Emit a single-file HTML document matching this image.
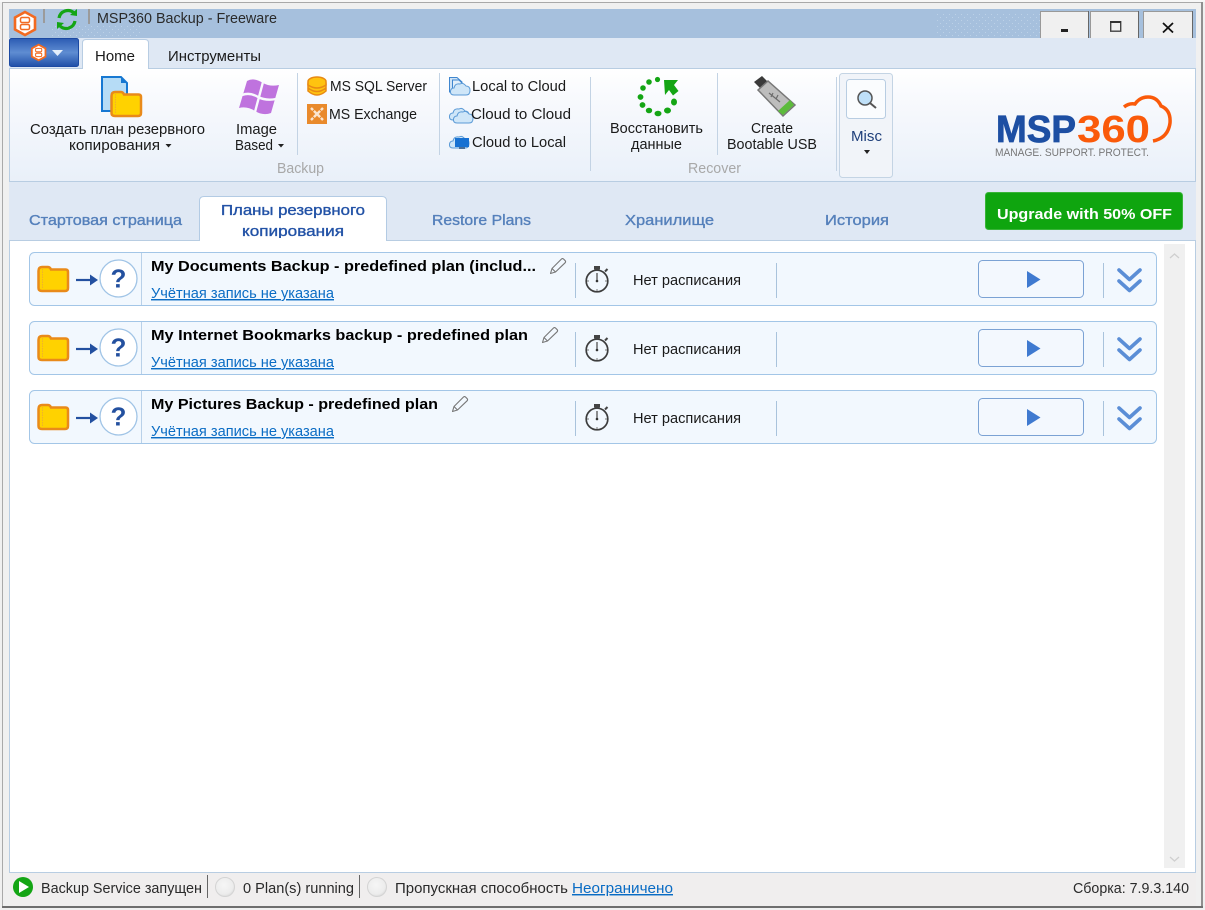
<!DOCTYPE html>
<html><head><meta charset="utf-8"><title>MSP360 Backup - Freeware</title>
<style>
html,body{margin:0;padding:0;background:#f0f0f0;width:1205px;height:910px;overflow:hidden}
svg{display:block}
text{font-family:"Liberation Sans","Noto Sans CJK SC",sans-serif;font-size:14.5px;fill:#1a1a1a}
.tab{font-size:14.5px;fill:#5580bb;stroke:#5580bb;stroke-width:.35px}
.act{fill:#2252a6;stroke:#2252a6}
.b{font-weight:bold;fill:#000}
.lnk{fill:#0a6cc4;text-decoration:underline}
.grp{fill:#a8a8a8}
</style></head><body>
<svg width="1205" height="910" viewBox="0 0 1205 910" xmlns="http://www.w3.org/2000/svg">
<defs>
<linearGradient id="rib" x1="0" y1="0" x2="0" y2="1"><stop offset="0" stop-color="#ffffff"/><stop offset=".3" stop-color="#f7f9fd"/><stop offset="1" stop-color="#e9f0f9"/></linearGradient>
<linearGradient id="mb" x1="0" y1="0" x2="0" y2="1"><stop offset="0" stop-color="#2c5cb4"/><stop offset=".5" stop-color="#5f8dd2"/><stop offset="1" stop-color="#1f4fa8"/></linearGradient>
<radialGradient id="led" cx=".45" cy=".4" r=".6"><stop offset="0" stop-color="#f6f6f6"/><stop offset=".8" stop-color="#ececec"/><stop offset="1" stop-color="#dcdcdc"/></radialGradient>
<pattern id="dots" width="6" height="6" patternUnits="userSpaceOnUse"><rect x="1" y="2" width="1" height="1" fill="#bcd1e7"/><rect x="4" y="5" width="1" height="1" fill="#bcd1e7"/></pattern>
<g id="folder">
<path d="M1.500 6 Q1.500 2 5 2 H11 Q13 2 14 4.500 H28.500 Q31 4.500 31 7 V23 Q31 26 28 26 H5 Q1.500 26 1.500 23Z" fill="#ffd200" stroke="#e98a1a" stroke-width="2.500"/>
<path d="M5.500 4 V24" stroke="#eeb12e" stroke-width="1" stroke-dasharray="1.500 1"/>
</g>
<g id="chev" fill="none" stroke="#5b8ed6" stroke-width="3.600" stroke-linecap="round" stroke-linejoin="round">
<path d="M2 2 L12.500 11.500 L23 2"/><path d="M2 13 L12.500 22.500 L23 13"/>
</g>
<g id="hex">
<path d="M12 1 L22 6.500 V18.500 L12 24 L2 18.500 V6.500Z" fill="#fff" stroke="#f26a21" stroke-width="2.600"/>
<rect x="7.500" y="6.500" width="9" height="5" rx="1.500" fill="#fff" stroke="#f26a21" stroke-width="1.500"/>
<rect x="7.500" y="13.500" width="9" height="5" rx="1.500" fill="#fff" stroke="#f26a21" stroke-width="1.500"/>
</g>
<g id="cloud"><path d="M4 15 Q0 15 .5 11 Q1 8 4 8 Q5 3 10 4 Q13 2 16 6 Q20 6 20 10.500 Q20 15 16 15Z"/></g>
<g id="row">
<rect x="29.500" y=".5" width="1127" height="53" rx="5" fill="#f2f8fe" stroke="#a3c6e7"/>
<line x1="141.500" y1="1" x2="141.500" y2="53" stroke="#b9d1e9"/>
<use href="#folder" x="37" y="13"/>
<path d="M76 28 H92" stroke="#2350a0" stroke-width="2.200"/><path d="M90 22.500 L98 28 L90 33.500Z" fill="#2350a0"/>
<circle cx="118.500" cy="26.500" r="18.500" fill="#fff" stroke="#a0c4e6" stroke-width="1.300"/>
<text x="118.500" y="35.500" text-anchor="middle" style="font-size:26px;font-weight:bold;fill:#23509f">?</text>
<line x1="575.500" y1="11" x2="575.500" y2="46" stroke="#a9c3dc"/>
<line x1="776.500" y1="11" x2="776.500" y2="46" stroke="#a9c3dc"/>
<circle cx="597" cy="29" r="10.800" fill="none" stroke="#3d3d3d" stroke-width="1.700"/>
<rect x="594" y="14" width="6" height="3.500" fill="#444"/><path d="M597 17 V19" stroke="#444" stroke-width="2"/>
<path d="M605 19.500 L607.500 17" stroke="#444" stroke-width="2"/>
<path d="M597 21 V29" stroke="#444" stroke-width="1.200"/><circle cx="597" cy="29" r="1.300" fill="#333"/>
<path d="M597 37 V39 M587 29 H589 M605 29 H607" stroke="#777" stroke-width="1"/>
<text x="633" y="33" textLength="108" lengthAdjust="spacingAndGlyphs">Нет расписания</text>
<rect x="978.500" y="8.500" width="105" height="37" rx="4" fill="#f3f8fe" stroke="#7ba2d4"/>
<path d="M1027 19 L1040.500 27.500 L1027 36Z" fill="#3f7ad0"/>
<line x1="1103.500" y1="11" x2="1103.500" y2="46" stroke="#a9c3dc"/>
<use href="#chev" x="1117" y="16"/>
<text x="151" y="46" class="lnk" textLength="183" lengthAdjust="spacingAndGlyphs">Учётная запись не указана</text>
</g>
<g id="pencil" fill="none" stroke="#777" stroke-width="1.100" stroke-linejoin="round">
<path d="M.5 15.500 L2 10.500 L11.500 1 Q12.500 .2 13.500 1 L15.200 2.700 Q16 3.700 15.200 4.700 L5.500 14 Z"/><path d="M2 10.500 L5.500 14"/>
</g>
</defs>

<!-- window frame -->
<rect width="1205" height="910" fill="#f0f0f0"/>
<rect x="0" y="0" width="1205" height="2" fill="#f7f7f7"/>
<rect x="2" y="2" width="1201" height="1" fill="#a9a9a9"/>
<rect x="2" y="2" width="1" height="905" fill="#a9a9a9"/>
<rect x="1201" y="2" width="2" height="905" fill="#8f8f8f"/>
<rect x="2" y="906" width="1201" height="2" fill="#6e6e6e"/>

<!-- title band -->
<rect x="9" y="9" width="1187" height="29" fill="#a6c0dd"/>
<rect x="50" y="26" width="90" height="12" fill="url(#dots)"/>
<rect x="935" y="14" width="105" height="24" fill="url(#dots)"/>
<use href="#hex" x="13" y="11"/>
<rect x="43" y="9" width="2" height="14" fill="#9b9b9b"/>
<g fill="none" stroke="#14a514" stroke-width="3.200">
<path d="M59 18 A9 9 0 0 1 74 13"/><path d="M75 21 A9 9 0 0 1 60 26"/>
</g>
<path d="M70 15 L77 16 L77 9Z M64 23 L57 22 L57 29Z" fill="#14a514"/>
<rect x="88" y="9" width="2" height="15" fill="#9b9b9b"/>
<text x="97" y="23" textLength="180" lengthAdjust="spacingAndGlyphs" style="fill:#2a2a2a">MSP360 Backup - Freeware</text>

<!-- window buttons -->
<g fill="#f0f0f0" stroke="#777">
<rect x="1040.500" y="11.500" width="48" height="30" stroke="#999"/>
<rect x="1090.500" y="11.500" width="48" height="30" stroke="#999"/>
<rect x="1143.500" y="11.500" width="49" height="30" stroke="#999"/>
</g>
<path d="M1088.500 11 V38 M1138.500 11 V38 M1192.500 11 V38" stroke="#666"/>
<rect x="1061" y="29" width="7" height="3" fill="#222"/>
<rect x="1110.700" y="21.700" width="10" height="9.500" fill="none" stroke="#444" stroke-width="1.400"/><rect x="1110" y="21" width="11" height="2" fill="#333"/>
<path d="M1163 23 L1173 32.500 M1173 23 L1163 32.500" stroke="#111" stroke-width="1.800"/>

<!-- tab strip -->
<rect x="9" y="38" width="1187" height="30" fill="#dfe8f4"/>
<rect x="9.500" y="38.500" width="69" height="28" rx="2" fill="url(#mb)" stroke="#1c4aa3"/>
<g transform="translate(30.500,44) scale(.68)"><use href="#hex"/></g>
<path d="M52 50 H63 L57.500 56Z" fill="#e4eefb"/>
<path d="M82.500 68 V43 Q82.500 39.500 86 39.500 H145 Q148.500 39.500 148.500 43 V68" fill="#fff" stroke="#b8cde3"/>
<text x="95" y="61" textLength="40" lengthAdjust="spacingAndGlyphs">Home</text>
<text x="168" y="61" textLength="93" lengthAdjust="spacingAndGlyphs">Инструменты</text>

<!-- ribbon -->
<rect x="9.500" y="68.500" width="1186" height="113" fill="url(#rib)" stroke="#b8cde2"/>
<rect x="83" y="67" width="65" height="3" fill="#fff"/>
<line x1="297.500" y1="73" x2="297.500" y2="155" stroke="#c3d3e4"/>
<line x1="439.500" y1="73" x2="439.500" y2="155" stroke="#c3d3e4"/>
<line x1="590.500" y1="77" x2="590.500" y2="171" stroke="#c3d3e4"/>
<line x1="717.500" y1="73" x2="717.500" y2="155" stroke="#c3d3e4"/>
<line x1="836.500" y1="77" x2="836.500" y2="171" stroke="#c3d3e4"/>

<!-- new plan icon -->
<path d="M102 77 H121 L127 83 V111 H102Z" fill="#b6dcf6" stroke="#1778d2" stroke-width="2"/>
<path d="M121 77 V83 H127Z" fill="#1778d2"/>
<use href="#folder" x="110" y="90"/>
<text x="30" y="134" textLength="175" lengthAdjust="spacingAndGlyphs">Создать план резервного</text>
<text x="69" y="150" textLength="91" lengthAdjust="spacingAndGlyphs">копирования</text>
<path d="M165.500 144 H171.500 L168.500 147.500Z" fill="#222"/>

<!-- windows icon -->
<path d="M247 81 Q254 77 263 83 Q270 87 279 85 L271 113 Q263 116 255 111 Q247 106 239 108Z" fill="#bf73de"/>
<path d="M263 82 L255 112 M242 95 Q250 92 258 97 Q266 101 276 99" fill="none" stroke="#f8fafd" stroke-width="2.400"/>
<text x="236" y="134" textLength="41" lengthAdjust="spacingAndGlyphs">Image</text>
<text x="235" y="150" textLength="38" lengthAdjust="spacingAndGlyphs">Based</text>
<path d="M278 144 H284 L281 147.500Z" fill="#222"/>

<!-- SQL -->
<g fill="#ffc30f" stroke="#e88a14" stroke-width="1.500">
<path d="M308 89 V91 Q317 99 326 91 V89Z"/>
<path d="M308 84 V88 Q317 95 326 88 V84Z"/>
<ellipse cx="317" cy="81.500" rx="9" ry="4.500"/>
<path d="M308 82 V85 Q317 91 326 85 V82"/>
</g>
<text x="330" y="91" textLength="97" lengthAdjust="spacingAndGlyphs">MS SQL Server</text>
<rect x="307" y="104" width="20" height="20" fill="#e98a2c"/>
<path d="M311 108 L323 120 M323 108 L311 120" stroke="#fbe6d0" stroke-width="2.400"/>
<path d="M317 107 L324 114 L317 121 L310 114Z" fill="none" stroke="#e98a2c" stroke-width="1.200"/>
<text x="329" y="119" textLength="88" lengthAdjust="spacingAndGlyphs">MS Exchange</text>

<!-- cloud group -->
<path d="M449.500 77.500 H457 L462 82 V92 H449.500Z" fill="#cfe3f5" stroke="#3f86cf"/>
<path d="M452.500 80 H459 L464 85 V94 H452.500Z" fill="#e2effa" stroke="#3f86cf"/>
<use href="#cloud" x="450" y="80" fill="#cfe6f8" stroke="#5b9ad6"/>
<text x="472" y="91" textLength="94" lengthAdjust="spacingAndGlyphs">Local to Cloud</text>
<use href="#cloud" x="449" y="105" fill="#cfe6f8" stroke="#5b9ad6"/>
<g transform="translate(453,108)"><use href="#cloud" fill="#cfe6f8" stroke="#5b9ad6"/></g>
<text x="471" y="119" textLength="100" lengthAdjust="spacingAndGlyphs">Cloud to Cloud</text>
<use href="#cloud" x="449" y="133" fill="#cfe6f8" stroke="#5b9ad6"/>
<rect x="455" y="138" width="14" height="9" fill="#1771d2"/><rect x="459" y="147" width="6" height="2" fill="#4a6f98"/>
<text x="472" y="147" textLength="94" lengthAdjust="spacingAndGlyphs">Cloud to Local</text>
<text x="277" y="173" class="grp" textLength="47" lengthAdjust="spacingAndGlyphs">Backup</text>

<!-- restore -->
<g fill="#14a514">
<circle cx="657.500" cy="79.500" r="2.600"/><circle cx="649" cy="82" r="2.800"/><circle cx="643" cy="88" r="2.800"/>
<circle cx="640.500" cy="97" r="2.900"/><circle cx="642.500" cy="105" r="2.900"/><ellipse cx="649" cy="110.500" rx="3.200" ry="2.800"/>
<ellipse cx="658" cy="113.500" rx="3.500" ry="2.800"/><ellipse cx="667.500" cy="110.500" rx="3.500" ry="3"/><ellipse cx="674" cy="102" rx="3" ry="3.500"/>
<path d="M664 80 H678 L674 85 L678.500 91 L673 95.500 L669 90 L665 95Z"/>
</g>
<text x="610" y="133" textLength="93" lengthAdjust="spacingAndGlyphs">Восстановить</text>
<text x="631" y="149" textLength="51" lengthAdjust="spacingAndGlyphs">данные</text>
<text x="688" y="173" class="grp" textLength="53" lengthAdjust="spacingAndGlyphs">Recover</text>

<!-- USB -->
<path d="M754 82 L762 76 L768 82 L760 88Z" fill="#3a3a3a"/>
<path d="M758 90 L768 81 L795 105 L783 116Z" fill="#bdbdbd" stroke="#777" stroke-width="1.500"/>
<path d="M778 111 L790 100 L794 105 L783 115Z" fill="#5cbb3c"/>
<path d="M769 93 L780 102 M773 93 L771 97 M778 95 L776 99" stroke="#6b6b6b" stroke-width="1.200" fill="none"/>
<text x="751" y="133" textLength="42" lengthAdjust="spacingAndGlyphs">Create</text>
<text x="727" y="149" textLength="90" lengthAdjust="spacingAndGlyphs">Bootable USB</text>

<!-- Misc -->
<rect x="839.500" y="73.500" width="53" height="104" rx="3" fill="#f1f4f9" stroke="#c4d4e4"/>
<rect x="846.500" y="79.500" width="39" height="39" rx="3" fill="#fafcfe" stroke="#b8cde2"/>
<circle cx="865" cy="98" r="7" fill="#bfe0f8" stroke="#555" stroke-width="1.500"/>
<path d="M870 103 L876 108" stroke="#555" stroke-width="2"/>
<text x="851" y="141" textLength="31" lengthAdjust="spacingAndGlyphs" style="fill:#1f3f7a">Misc</text>
<path d="M864 150 H870 L867 154Z" fill="#222"/>

<!-- logo -->
<text x="996" y="142" textLength="80" lengthAdjust="spacingAndGlyphs" style="font-size:38px;font-weight:bold;fill:#1d4fa3;stroke:#1d4fa3;stroke-width:.8px">MSP</text>
<text x="1077" y="142" textLength="73" lengthAdjust="spacingAndGlyphs" style="font-size:38px;font-weight:bold;fill:#fa5a0a">360</text>
<path d="M1124 107 Q1129 103 1135 104 Q1140 97 1148 97 Q1157 97 1161 106 Q1171 110 1170 123 Q1168 138 1153 141" fill="none" stroke="#fa5a0a" stroke-width="3.500"/>
<text x="995" y="156" textLength="154" lengthAdjust="spacingAndGlyphs" style="font-size:11px;fill:#777">MANAGE. SUPPORT. PROTECT.</text>

<!-- tab area -->
<rect x="9" y="182" width="1187" height="58" fill="#dfe8f4"/>
<text x="29" y="225" class="tab" textLength="153" lengthAdjust="spacingAndGlyphs">Стартовая страница</text>
<path d="M199.500 240 V201 Q199.500 196.500 204 196.500 H382 Q386.500 196.500 386.500 201 V240" fill="#fff" stroke="#b3cbe4"/>
<text x="221" y="215" class="tab act" textLength="144" lengthAdjust="spacingAndGlyphs">Планы резервного</text>
<text x="242" y="236" class="tab act" textLength="102" lengthAdjust="spacingAndGlyphs">копирования</text>
<text x="432" y="225" class="tab" textLength="99" lengthAdjust="spacingAndGlyphs">Restore Plans</text>
<text x="625" y="225" class="tab" textLength="89" lengthAdjust="spacingAndGlyphs">Хранилище</text>
<text x="825" y="225" class="tab" textLength="64" lengthAdjust="spacingAndGlyphs">История</text>
<rect x="985.500" y="192.500" width="197" height="37" rx="3" fill="#0fa50f" stroke="#38b438"/>
<text x="997" y="219" textLength="175" lengthAdjust="spacingAndGlyphs" style="font-weight:bold;font-size:15px;fill:#fff">Upgrade with 50% OFF</text>

<!-- content -->
<rect x="9.500" y="240.500" width="1186" height="632" fill="#fff" stroke="#b8cde2"/>
<rect x="200" y="238" width="186" height="3" fill="#fff"/>
<rect x="1164" y="244" width="21" height="624" fill="#f0f0f0"/>
<path d="M1170 258 L1174.500 254 L1179 258" fill="none" stroke="#cfcfcf" stroke-width="1.300"/>
<path d="M1170 857 L1174.500 861 L1179 857" fill="none" stroke="#cfcfcf" stroke-width="1.300"/>

<use href="#row" y="252"/>
<use href="#row" y="321"/>
<use href="#row" y="390"/>
<text x="151" y="271" class="b" textLength="385" lengthAdjust="spacingAndGlyphs">My Documents Backup - predefined plan (includ...</text>
<use href="#pencil" x="550" y="258"/>
<text x="151" y="340" class="b" textLength="377" lengthAdjust="spacingAndGlyphs">My Internet Bookmarks backup - predefined plan</text>
<use href="#pencil" x="542" y="327"/>
<text x="151" y="409" class="b" textLength="287" lengthAdjust="spacingAndGlyphs">My Pictures Backup - predefined plan</text>
<use href="#pencil" x="452" y="396"/>

<!-- status bar -->
<rect x="10" y="873" width="1186" height="33" fill="#f0eeee"/>
<circle cx="23" cy="887" r="10" fill="#14a514"/>
<path d="M19 881 L29 887 L19 893Z" fill="#fff"/>
<text x="41" y="893" textLength="161" lengthAdjust="spacingAndGlyphs" style="fill:#2a2a2a">Backup Service запущен</text>
<line x1="207.500" y1="875" x2="207.500" y2="898" stroke="#666"/>
<circle cx="225" cy="887" r="9.500" fill="url(#led)" stroke="#d4d4d4"/>
<text x="243" y="893" textLength="111" lengthAdjust="spacingAndGlyphs" style="fill:#2a2a2a">0 Plan(s) running</text>
<line x1="359.500" y1="875" x2="359.500" y2="898" stroke="#666"/>
<circle cx="377" cy="887" r="9.500" fill="url(#led)" stroke="#d4d4d4"/>
<text x="395" y="893" textLength="173" lengthAdjust="spacingAndGlyphs" style="fill:#2a2a2a">Пропускная способность</text>
<text x="572" y="893" class="lnk" textLength="101" lengthAdjust="spacingAndGlyphs">Неограничено</text>
<text x="1073" y="893" textLength="116" lengthAdjust="spacingAndGlyphs" style="fill:#2a2a2a">Сборка: 7.9.3.140</text>
</svg>
</body></html>
